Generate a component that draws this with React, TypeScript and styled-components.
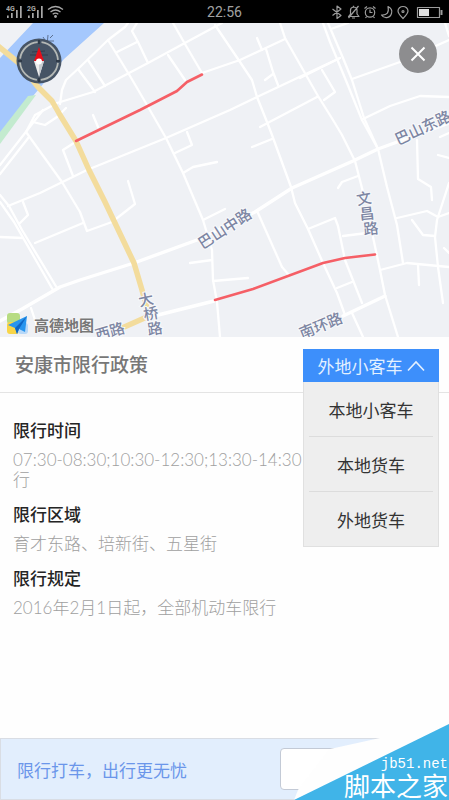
import React, { useState } from "react";
import styled, { createGlobalStyle } from "styled-components";

const GlobalStyle = createGlobalStyle`
  * { box-sizing: border-box; }
  body {
    margin: 0;
    background: #fff;
    font-family: Roboto, "Noto Sans CJK SC", sans-serif;
  }
  button { font: inherit; border: 0; padding: 0; cursor: pointer; }
  h1, h2, p, ul { margin: 0; padding: 0; }
`;

const Screen = styled.div`
  position: relative;
  display: flex;
  flex-direction: column;
  min-height: 100vh;
  overflow: hidden;
  background: #fefefe;
`;

const StatusBar = styled.header`
  display: grid;
  grid-template-columns: 1fr auto 1fr;
  align-items: center;
  height: 23px;
  padding: 0 6px;
  background: #000;
  color: #a2a2a2;
  font-size: 14px;
  line-height: 24px;
`;

const StatusIcons = styled.div<{ $end?: boolean }>`
  display: flex;
  justify-content: ${(p) => (p.$end ? "flex-end" : "flex-start")};
  svg { display: block; }
`;

const MapArea = styled.section`
  position: relative;
  height: 314px;
  background: #eff1f5;
`;

const MapCanvas = styled.svg`
  display: block;
  width: 100%;
  height: 100%;
`;

const Compass = styled.button`
  position: absolute;
  left: 16px;
  top: 15px;
  width: 46px;
  height: 46px;
  background: none;
  svg { display: block; }
`;

const CloseButton = styled.button`
  position: absolute;
  right: 12px;
  top: 12px;
  width: 38px;
  height: 38px;
  border-radius: 50%;
  background: #8d8d8f;
  svg { display: block; }
`;

const MapBrand = styled.div`
  position: absolute;
  left: 6px;
  bottom: 0;
  display: flex;
  align-items: center;
  gap: 4px;
  height: 26px;
  color: #777;
  font-size: 15px;
  font-weight: 700;
  text-shadow: 0 0 1px #fff, 0 0 2px #fff;
`;

const PolicyHeader = styled.div`
  display: flex;
  align-items: center;
  justify-content: space-between;
  height: 56px;
  padding: 2px 10px 0 15px;
  border-bottom: 1px solid #e4e4e4;
`;

const Title = styled.h1`
  color: #777;
  font-size: 19px;
  font-weight: 500;
  line-height: 28px;
`;

const Dropdown = styled.div`
  position: relative;
  width: 136px;
`;

const DropdownTrigger = styled.button`
  display: flex;
  align-items: center;
  justify-content: center;
  gap: 4px;
  width: 100%;
  height: 33px;
  background: #3d8ffb;
  color: #e4f1ff;
  font-size: 17px;
`;

const Menu = styled.ul`
  position: absolute;
  z-index: 1;
  top: 100%;
  left: 0;
  right: 0;
  padding: 0 5px;
  list-style: none;
  background: #eee;
  border: 1px solid #e0e0e0;
  border-top: 0;
`;

const MenuItem = styled.li`
  & + & { border-top: 1px solid #dcdcdc; }
`;

const MenuButton = styled.button`
  display: block;
  width: 100%;
  height: 54px;
  background: none;
  color: #333;
  font-size: 17px;
`;

const PolicyBody = styled.main`
  flex: 1;
  display: flex;
  flex-direction: column;
  gap: 13px;
  padding: 26px 13px;
`;

const Rule = styled.section`
  display: flex;
  flex-direction: column;
  gap: 7px;
`;

const RuleTitle = styled.h2`
  color: #252525;
  font-size: 17px;
  font-weight: 500;
  line-height: 24px;
`;

const RuleText = styled.p`
  color: #a0a0a0;
  font-family: Lato, "Noto Sans CJK SC", sans-serif;
  font-size: 17px;
  font-weight: 300;
  line-height: 20px;
`;

const PromoBar = styled.footer`
  display: flex;
  align-items: center;
  justify-content: space-between;
  height: 62px;
  padding: 0 16px;
  border: 1px solid #d9dde4;
  background: #e2eefd;
  color: #6b96ea;
  font-size: 17px;
`;

const PromoButton = styled.button`
  width: 152px;
  height: 42px;
  border: 1px solid #c3cad6;
  border-radius: 4px;
  background: #fff;
`;

const Watermark = styled.div`
  position: absolute;
  z-index: 2;
  right: 0;
  bottom: 0;
  width: 155px;
  height: 80px;
  color: #fff;
  pointer-events: none;
  svg { position: absolute; inset: 0; }
`;

const WatermarkText = styled.div`
  position: absolute;
  right: 1px;
  bottom: 0;
  display: flex;
  flex-direction: column;
  align-items: flex-end;
  font-family: "Noto Sans CJK SC", sans-serif;
  font-size: 26px;
  line-height: 30px;
`;

const WatermarkSite = styled.span`
  font-family: "Liberation Mono", monospace;
  font-size: 14px;
  line-height: 12px;
`;

const roads = [
  "137,23 132,31 138,42 148,63 ",
  "60,104 62,90 66,80 80,67 108,40 125,27 128,23",
  "108,40 130,76 147,105 166,138 183,173 203,220 212,250 213,280 217,302 220,337",
  "117,52 137,42",
  "88,60 105,86",
  "78,69 95,92",
  "26,132 35,115 57,103 93,92 148,63 183,44 222,23",
  "43,110 0,165",
  "29,137 0,174",
  "33,122 45,125 57,117 66,108",
  "26,132 62,182 80,212 87,231 112,222 135,204 128,181",
  "35,243 83,223",
  "63,150 73,176",
  "63,150 77,141",
  "93,115 98,127",
  "8,206 40,193 87,170 166,138 230,110 257,97 310,72 340,58",
  "0,195 9,206 22,230 57,288",
  "0,202 14,222 53,290",
  "23,202 28,215 20,223",
  "0,237 23,238",
  "187,132 192,145 175,153",
  "183,173 193,167 217,162",
  "203,220 225,209",
  "168,55 185,80",
  "173,23 185,44 202,73",
  "202,73 240,60 285,39",
  "215,25 240,62 252,80 257,97 267,122 272,135 291,187 295,203 308,229 323,263 337,293 345,315",
  "352,313 363,337",
  "257,38 262,50",
  "266,49 273,72 278,85",
  "265,80 273,74",
  "280,23 285,38 306,75 318,96 333,120 342,135 355,161 363,192",
  "260,127 317,97",
  "252,147 272,139",
  "323,23 330,42 347,83 362,120 378,149 387,187 397,225 403,263",
  "328,23 343,58 352,80 364,118 378,149",
  "331,29 348,23",
  "322,70 335,92 324,100",
  "300,78 340,58",
  "352,79 400,62 449,40",
  "445,23 449,36",
  "363,119 390,106 420,96 449,97",
  "417,140 418,179 431,187 432,200",
  "438,155 449,158",
  "440,137 449,133",
  "397,218 427,211 438,217 449,213",
  "449,183 437,220 435,237 438,267 443,303",
  "412,220 423,235 435,236",
  "380,270 407,263 449,267",
  "418,265 419,285",
  "444,248 449,253",
  "338,188 342,182 358,176",
  "308,229 335,218 338,226 345,260 362,303",
  "343,236 367,233",
  "373,237 380,270 385,295 398,337",
  "337,288 352,282",
  "258,213 282,267 288,274",
  "213,281 248,278",
  "190,263 212,260",
  "31,308 37,326",
];

const mainRoads = [
  "0,321 22,309 60,287 80,280 134,263 197,240 255,212 292,188 353,161 378,149 449,123",
  "150,317 214,301",
  "343,316 385,296",
];

const mapLabels: { text: string; x: number; y: number; angle: number }[] = [
  { text: "巴山东路", x: 423, y: 128, angle: -25 },
  { text: "巴山中路", x: 225, y: 229, angle: -33 },
  { text: "南环路", x: 321, y: 326, angle: -22 },
  { text: "西路", x: 110, y: 332, angle: -16 },
  { text: "文", x: 364, y: 199, angle: -10 },
  { text: "昌", x: 367, y: 214, angle: -6 },
  { text: "路", x: 371, y: 229, angle: -6 },
  { text: "大", x: 146, y: 300, angle: -12 },
  { text: "桥", x: 151, y: 314, angle: -10 },
  { text: "路", x: 155, y: 329, angle: -8 },
];

function CityMap() {
  return (
    <MapCanvas viewBox="0 23 449 314" preserveAspectRatio="xMidYMid slice" role="img" aria-label="限行区域地图">
      <rect y="23" width="449" height="314" fill="#eff1f5" />
      <path d="M33 23H104L64 59L33 96L0 134V58Z" fill="#a5c8fd" />
      <path d="M28 96L36 95L0 144V132Z" fill="#c3ebcf" />
      <g fill="none" stroke="#fff" strokeLinejoin="round" strokeLinecap="round">
        <g strokeWidth="2.3">
          {roads.map((p) => <polyline key={p} points={p} />)}
        </g>
        <g strokeWidth="3.4">
          {mainRoads.map((p) => <polyline key={p} points={p} />)}
        </g>
      </g>
      <g fill="none" stroke="#f3dc9c" strokeWidth="5.5" strokeLinejoin="round">
        <path d="M-2 46L20 64L38 87L52 101L60 115L76 141L89 170L105 202L124 242L134 263L142 290L149 316L122 328" />
      </g>
      <g fill="none" stroke="#f55f66" strokeWidth="2.6" strokeLinejoin="round" strokeLinecap="round">
        <path d="M76 141L140 110L177 91L187 82L202 74.500" />
        <path d="M215 300L253 289L323 263L345 258L375 254.500" />
      </g>
      <path d="M41 41H54M48 35L47 46M43 37L45 40M50 38L53 35M31 51L42 49" stroke="#5c7090" strokeWidth="1" fill="none" />
      <g
        fill="#7d86a3"
        stroke="#f8f9fb"
        strokeWidth="2"
        paintOrder="stroke"
        fontSize="15"
        fontWeight="500"
        textAnchor="middle"
        fontFamily="'Noto Sans CJK SC', sans-serif"
      >
        {mapLabels.map(({ text, x, y, angle }) => (
          <text key={`${text}${x}`} x={x} y={y} dy="5" transform={`rotate(${angle} ${x} ${y})`}>{text}</text>
        ))}
      </g>
    </MapCanvas>
  );
}

function SignalIcons() {
  return (
    <svg width="60" height="23" viewBox="6 0 60 23" aria-label="信号">
      <g fill="#a8a8a8">
        <text x="6" y="10" fontSize="7" fontWeight="700" fontFamily="Roboto, sans-serif">4G</text>
        <text x="27" y="10" fontSize="7" fontWeight="700" fontFamily="Roboto, sans-serif">2G</text>
        {[7, 28].map((x) => (
          <g key={x}>
            <rect x={x} y="14.500" width="1.700" height="2.500" />
            <rect x={x + 4} y="12" width="1.700" height="5" />
            <rect x={x + 9} y="9" width="1.700" height="8" />
            <rect x={x + 13} y="5" width="1.700" height="12" />
          </g>
        ))}
        <circle cx="55.500" cy="15.500" r="1.400" />
      </g>
      <g fill="none" stroke="#a8a8a8" strokeWidth="1.300">
        <path d="M48 8.500Q55.500 2.500 63 8.500" />
        <path d="M50.500 11Q55.500 7 60.500 11" />
        <path d="M52.700 13.300Q55.500 11 58.300 13.300" />
      </g>
    </svg>
  );
}

function SystemIcons() {
  return (
    <svg width="112" height="23" viewBox="331 0 112 23" aria-label="系统状态">
      <g fill="none" stroke="#9c9c9c" strokeWidth="1.200" strokeLinejoin="round">
        <path d="M332.500 8L341 14.500L337 17.500V5L341 8L332.500 14.500" />
        <path d="M348.500 15.500H359L357 13V9Q357 6.500 353.500 6Q350.500 6.500 350.500 9V13ZM352 17H355M358.500 5L348.500 17M353.500 6V4.800" />
        <circle cx="370" cy="11.500" r="4.700" />
        <path d="M370 8.500V11.500H372.500M364.500 7.500L367 5.500M375.500 7.500L373 5.500M366.700 15.500L365.500 17M373.300 15.500L374.500 17" />
        <path d="M388 5.500Q393 8 391.500 12.500C390 17.500 384 18 381.500 14Q390 14.500 388 5.500Z" />
        <path d="M403 17.500Q398 12.500 398 10A5 4.500 0 0 1 408 10Q408 12.500 403 17.500Z" />
        <circle cx="403" cy="10.500" r="1" />
        <rect x="417.500" y="6.500" width="22" height="10" />
        <path d="M441.500 9V14" strokeWidth="2" />
      </g>
      <rect x="419" y="8" width="10" height="7" fill="#dedede" />
    </svg>
  );
}

function CompassIcon() {
  return (
    <svg width="46" height="46" viewBox="0 0 46 46">
      <circle cx="23" cy="23" r="22.500" fill="#465465" />
      <circle cx="23" cy="23" r="19" fill="none" stroke="#b4b8b5" strokeWidth="1.800" strokeDasharray="25.850 4" strokeDashoffset="-2" />
      <path d="M23 2V6M23 40V44M2 23H6M40 23H44" stroke="#303b49" strokeWidth="2" />
      <path d="M16 14L29 13M14 17H32" stroke="#303d4f" strokeWidth="1" />
      <path d="M23 9L28 23H18Z" fill="#e60c18" />
      <path d="M18 23H28L23 39Z" fill="#ededed" />
      <path d="M23 24L28 23L23 39Z" fill="#c8cbd0" />
      <circle cx="23" cy="23.500" r="3" fill="#fff" />
    </svg>
  );
}

function BrandIcon() {
  return (
    <svg width="24" height="26" viewBox="0 0 24 26">
      <rect x="1" y="2" width="13" height="11" rx="3" fill="#b7dc83" />
      <rect x="1" y="11" width="12" height="12" rx="3" fill="#f8d548" />
      <rect x="12" y="12" width="10" height="11" rx="3" fill="#b7d8f8" />
      <path d="M21 5L2 14L9 17L11 23L13 18L19 21Z" fill="#2895ee" />
      <path d="M21 5L9 17L11 23L13 18Z" fill="#0f66c4" />
    </svg>
  );
}

const vehicleTypes = ["本地小客车", "本地货车", "外地货车"];

const rules: { title: string; lines: string[] }[] = [
  { title: "限行时间", lines: ["07:30-08:30;10:30-12:30;13:30-14:30", "行"] },
  { title: "限行区域", lines: ["育才东路、培新街、五星街"] },
  { title: "限行规定", lines: ["2016年2月1日起，全部机动车限行"] },
];

export default function App() {
  const [open, setOpen] = useState(true);
  const [vehicle, setVehicle] = useState("外地小客车");

  return (
    <Screen>
      <GlobalStyle />
      <StatusBar>
        <StatusIcons><SignalIcons /></StatusIcons>
        <time>22:56</time>
        <StatusIcons $end><SystemIcons /></StatusIcons>
      </StatusBar>
      <MapArea>
        <CityMap />
        <Compass aria-label="指南针"><CompassIcon /></Compass>
        <CloseButton aria-label="关闭">
          <svg width="38" height="38" viewBox="0 0 38 38">
            <path d="M12.500 12.500L25.500 25.500M25.500 12.500L12.500 25.500" stroke="#fff" strokeWidth="2" />
          </svg>
        </CloseButton>
        <MapBrand><BrandIcon />高德地图</MapBrand>
      </MapArea>
      <PolicyHeader>
        <Title>安康市限行政策</Title>
        <Dropdown>
          <DropdownTrigger aria-expanded={open} onClick={() => setOpen(!open)}>
            {vehicle}
            <svg width="18" height="12" viewBox="0 0 18 12">
              <path d="M1 10.500L9 2L17 10.500" fill="none" stroke="#e4f1ff" strokeWidth="1.600" />
            </svg>
          </DropdownTrigger>
          {open && (
            <Menu>
              {vehicleTypes.map((name) => (
                <MenuItem key={name}>
                  <MenuButton onClick={() => { setVehicle(name); setOpen(false); }}>{name}</MenuButton>
                </MenuItem>
              ))}
            </Menu>
          )}
        </Dropdown>
      </PolicyHeader>
      <PolicyBody>
        {rules.map(({ title, lines }) => (
          <Rule key={title}>
            <RuleTitle>{title}</RuleTitle>
            <RuleText>
              {lines.map((line, i) => (
                <React.Fragment key={line}>{i > 0 && <br />}{line}</React.Fragment>
              ))}
            </RuleText>
          </Rule>
        ))}
      </PolicyBody>
      <PromoBar>
        <span>限行打车，出行更无忧</span>
        <PromoButton aria-label="打车" />
      </PromoBar>
      <Watermark>
        <svg width="155" height="80" viewBox="0 0 155 80">
          <path d="M36 29L86 18L155 0V10L0 80L4 70Z" fill="#fefefe" />
          <path d="M155 4V80H0Z" fill="#40b4e8" />
        </svg>
        <WatermarkText>
          <WatermarkSite>jb51.net</WatermarkSite>
          脚本之家
        </WatermarkText>
      </Watermark>
    </Screen>
  );
}
